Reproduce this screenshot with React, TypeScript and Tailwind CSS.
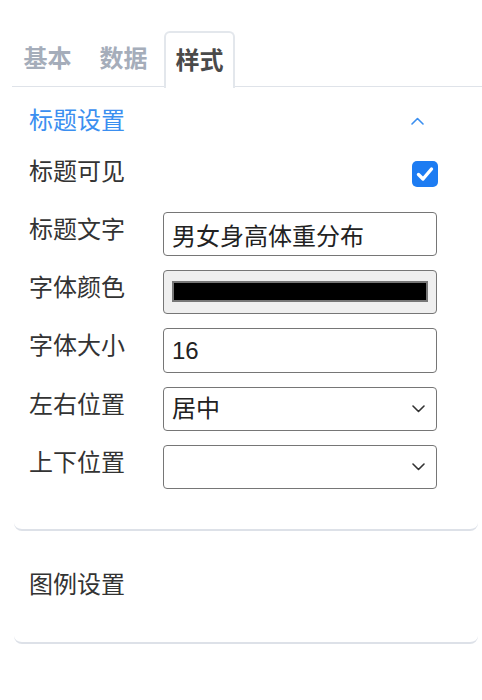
import { useState } from 'react';

const font = { fontFamily: '"Liberation Sans", "Noto Sans CJK SC", sans-serif' };

const Chevron = ({ up = false, className = '' }: { up?: boolean; className?: string }) => (
  <svg width="13" height="8" viewBox="0 0 13 8" className={className}>
    <path
      d={up ? 'M1 7 L6.5 1.5 L12 7' : 'M1 1 L6.5 6.5 L12 1'}
      fill="none"
      stroke="currentColor"
      strokeWidth="1.6"
      strokeLinecap="round"
      strokeLinejoin="round"
    />
  </svg>
);

const Row = ({ label, children }: { label: string; children: React.ReactNode }) => (
  <div className="flex items-start">
    <div className="w-[134px] leading-[36px] text-[24px] text-[#333]">{label}</div>
    {children}
  </div>
);

const Select = ({ value }: { value: string }) => (
  <div className="flex items-center justify-between w-[274px] h-[44px] border border-[#767676] rounded-[4px] pl-2 pr-[11px] text-[24px] text-[#222]">
    <span>{value}</span>
    <Chevron className="text-[#333]" />
  </div>
);

const App = () => {
  const [visible, setVisible] = useState(true);
  const [title, setTitle] = useState('男女身高体重分布');
  const [size, setSize] = useState('16');

  return (
    <div className="w-[482px] h-[700px] bg-white" style={font}>
      <div className="pt-[31px] pl-3">
        <div className="flex gap-[5px] border-b border-[#dfe3e9] h-[56px]">
          <div className="w-[71px] flex items-center justify-center text-[24px] font-semibold text-[#a5adba] border border-transparent">
            基本
          </div>
          <div className="w-[71px] flex items-center justify-center text-[24px] font-semibold text-[#a5adba] border border-transparent">
            数据
          </div>
          <div className="w-[71px] h-[57px] flex items-center justify-center text-[24px] font-semibold text-[#4a4a4a] border-2 border-b-0 border-[#e3e7ec] rounded-t-[6px] bg-white">
            样式
          </div>
        </div>
      </div>

      <div className="ml-[14px] mr-[4px] border-b-2 border-[#dde1e8] rounded-b-[8px] pl-[15px] pt-4 pb-[40px]">
        <div className="flex items-center justify-between pr-[54px] leading-[36px]">
          <span className="text-[24px] text-[#3b8ff0]">标题设置</span>
          <Chevron up className="text-[#3b8ff0]" />
        </div>

        <div className="mt-[15px] flex flex-col gap-[22px]">
          <div className="flex items-start justify-between pr-[40px]">
            <div className="leading-[36px] text-[24px] text-[#333]">标题可见</div>
            <button
              onClick={() => setVisible(!visible)}
              className={`mt-[7px] w-[26px] h-[26px] rounded-[5px] flex items-center justify-center ${
                visible ? 'bg-[#1d7cf2]' : 'bg-white border border-[#767676]'
              }`}
            >
              {visible && (
                <svg width="18" height="16" viewBox="0 0 18 16">
                  <path
                    d="M2.5 8.5 L7 13 L15.5 3"
                    fill="none"
                    stroke="white"
                    strokeWidth="3.4"
                    strokeLinecap="round"
                    strokeLinejoin="round"
                  />
                </svg>
              )}
            </button>
          </div>

          <div className="flex flex-col gap-[14px]">
            <Row label="标题文字">
              <input
                value={title}
                onChange={(e) => setTitle(e.target.value)}
                className="w-[274px] h-[44px] border border-[#767676] rounded-[4px] px-2 text-[24px] text-[#222] outline-none"
                style={font}
              />
            </Row>
            <Row label="字体颜色">
              <div className="w-[274px] h-[44px] border border-[#767676] rounded-[4px] bg-[#efefef] px-2 pt-[10px] pb-[11px]">
                <div className="w-full h-full bg-black border-2 border-[#777]" />
              </div>
            </Row>
            <Row label="字体大小">
              <input
                value={size}
                onChange={(e) => setSize(e.target.value)}
                className="w-[274px] h-[45px] border border-[#767676] rounded-[4px] px-2 text-[24px] text-[#222] outline-none"
                style={font}
              />
            </Row>
            <Row label="左右位置">
              <Select value="居中" />
            </Row>
            <Row label="上下位置">
              <Select value="" />
            </Row>
          </div>
        </div>
      </div>

      <div className="ml-[14px] mr-[4px] border-b-2 border-[#dde1e8] rounded-b-[8px] pl-[15px] pt-[36px] pb-[39px]">
        <div className="leading-[36px] text-[24px] text-[#333]">图例设置</div>
      </div>
    </div>
  );
};

export default App;
